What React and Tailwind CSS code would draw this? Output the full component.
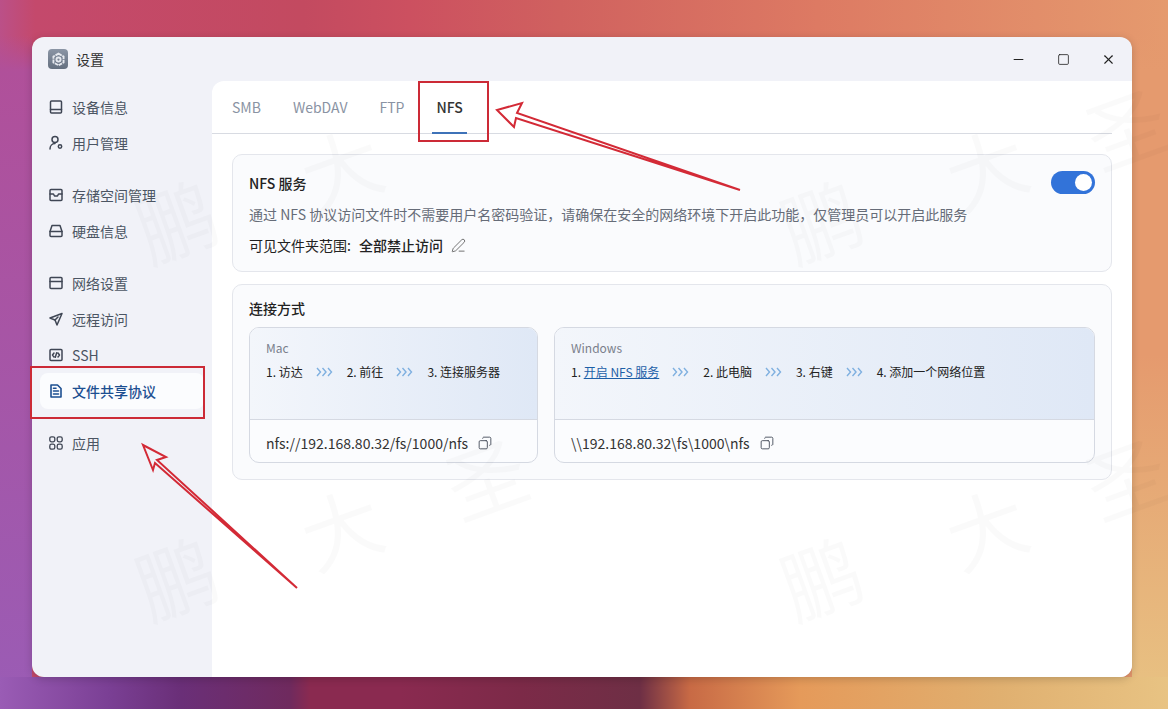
import { Copy, PenLine, Minus, Square, X } from "lucide-react";

const font = { fontFamily: '"Noto Sans CJK SC", "Noto Sans", sans-serif' };

function IconBase({ children }) {
  return (
    <svg width="16" height="16" viewBox="0 0 16 16" fill="none" stroke="#3f4654" strokeWidth="1.5" strokeLinejoin="round" strokeLinecap="round" className="shrink-0">
      {children}
    </svg>
  );
}

const icons = {
  device: <IconBase><rect x="2.5" y="2" width="11" height="12" rx="1" /><path d="M2.5 10.5h11" /></IconBase>,
  user: <IconBase><circle cx="7" cy="4.6" r="3" /><path d="M2 14c0-3 2-5.4 5-5.4" /><circle cx="12" cy="11.5" r="1.7" /></IconBase>,
  storage: <IconBase><rect x="2" y="2.5" width="12" height="11" rx="1" /><path d="M2 7h3.5l1 2h3l1-2H14" /></IconBase>,
  disk: <IconBase><path d="M4 2.5h8l2 6v4a1 1 0 0 1-1 1H3a1 1 0 0 1-1-1v-4z" /><path d="M2 8.5h12" /></IconBase>,
  network: <IconBase><rect x="2" y="2.5" width="12" height="11" rx="1" /><path d="M2 6.5h12" /></IconBase>,
  remote: <IconBase><path d="M14 2.5 2 7l5 2 2 5z" /><path d="M7 9l3-3" /></IconBase>,
  ssh: <IconBase><rect x="2" y="2.5" width="12" height="11" rx="1" /><path d="M6 6 4.5 8 6 10M10 6l1.5 2L10 10M8.7 5.8 7.3 10.2" /></IconBase>,
  file: (
    <svg width="16" height="16" viewBox="0 0 16 16" fill="none" stroke="#1d4f91" strokeWidth="1.6" strokeLinejoin="round" strokeLinecap="round" className="shrink-0">
      <path d="M3 2h6.5L13 5.5V14H3z" /><path d="M5.5 8h5M5.5 11h5M5.5 5.2H8" />
    </svg>
  ),
  apps: (
    <svg width="16" height="16" viewBox="0 0 16 16" fill="none" stroke="#3f4654" strokeWidth="1.3" className="shrink-0">
      <rect x="1.8" y="1.8" width="5" height="5" rx="1.7" />
      <rect x="9.2" y="1.8" width="5" height="5" rx="1.7" />
      <rect x="1.8" y="9.2" width="5" height="5" rx="1.7" />
      <rect x="9.2" y="9.2" width="5" height="5" rx="1.7" />
    </svg>
  ),
};

const groups = [
  [
    { label: "设备信息", icon: icons.device },
    { label: "用户管理", icon: icons.user },
  ],
  [
    { label: "存储空间管理", icon: icons.storage },
    { label: "硬盘信息", icon: icons.disk },
  ],
  [
    { label: "网络设置", icon: icons.network },
    { label: "远程访问", icon: icons.remote },
    { label: "SSH", icon: icons.ssh },
    { label: "文件共享协议", icon: icons.file, active: true },
  ],
  [{ label: "应用", icon: icons.apps }],
];

const marks = [
  ["鹏", "left-[135px] top-[178px]"],
  ["大", "left-[300px] top-[125px]"],
  ["大", "left-[300px] top-[485px]"],
  ["圣", "left-[445px] top-[435px]"],
  ["鹏", "left-[135px] top-[535px]"],
  ["鹏", "left-[780px] top-[178px]"],
  ["大", "left-[945px] top-[125px]"],
  ["大", "left-[945px] top-[485px]"],
  ["圣", "left-[1085px] top-[85px]"],
  ["圣", "left-[1085px] top-[435px]"],
  ["鹏", "left-[780px] top-[535px]"],
];

function Chevrons() {
  return (
    <svg width="17" height="10" viewBox="0 0 17 10" fill="none" stroke="#7fb0e0" strokeWidth="1.4" className="ml-[13px] mr-[14px] shrink-0">
      <path d="M1 1l3.5 4L1 9M6.5 1 10 5 6.5 9M12 1l3.5 4-3.5 4" />
    </svg>
  );
}

function ConnectCard({ name, className, steps, address }) {
  return (
    <div className={`flex flex-col overflow-hidden rounded-[10px] border border-[#d5d9e2] bg-[#fbfcfe] ${className}`}>
      <div className="h-[92px] border-b border-[#d5d9e2] bg-gradient-to-r from-[#f3f6fb] to-[#dfe8f6] px-4 pt-[11px]">
        <div className="text-xs leading-[18px] text-[#7a808c]">{name}</div>
        <div className="mt-[6px] flex items-center text-xs leading-[18px] text-[#222]">
          {steps.map((step, i) => (
            <div key={i} className="flex items-center">
              {i > 0 && <Chevrons />}
              <span>{step}</span>
            </div>
          ))}
        </div>
      </div>
      <div className="flex flex-1 items-center gap-[10px] px-4 pt-1 text-sm text-[#333]">
        <span>{address}</span>
        <Copy size={14} color="#3f4654" strokeWidth={1.5} className="-scale-x-100" />
      </div>
    </div>
  );
}

export default function App() {
  return (
    <div
      style={font}
      className="relative h-[709px] w-[1168px] overflow-hidden bg-[image:linear-gradient(90deg,#9a5cb5_0px,#7a3f94_110px,#6a2f78_180px,#6f2a5e_290px,#8a2a50_310px,#8a2a50_400px,#7c2a48_520px,#6e2f45_640px,#c86a45_690px,#e59a5a_800px,#e0b070_1000px,#e8c383_1168px),linear-gradient(180deg,transparent_0%,transparent_5%,#b0509a_10%,#9a5cb5_100%),linear-gradient(180deg,transparent_0%,transparent_5%,#e59a6e_10%,#e59a6e_50%,#e8c383_100%),linear-gradient(90deg,#bb5088_0%,#c4496c_3%,#c34a60_26%,#cc5060_35%,#d0615f_48%,#dd7a63_70%,#e59a6e_100%)] bg-[size:100%_32px,32px_100%,36px_100%,100%_100%] bg-[position:0_100%,0_0,100%_0,0_0] bg-no-repeat pl-8 pt-[37px]"
    >
      <div className="flex h-[640px] w-[1100px] overflow-hidden rounded-xl bg-[#f1f2f8] shadow-[0_2px_8px_rgba(0,0,0,0.18)]">
        <aside className="w-[180px] shrink-0">
          <div className="flex h-11 items-center gap-2 pl-4 text-sm text-[#333]">
            <div className="flex h-5 w-5 items-center justify-center rounded bg-gradient-to-b from-[#8b95a5] to-[#657080]">
              <svg width="15" height="15" viewBox="0 0 16 16" fill="none" stroke="#e5e8ee" strokeWidth="2">
                <circle cx="8" cy="8" r="2.2" />
                <path d="M8 1.8 13.4 4.9v6.2L8 14.2 2.6 11.1V4.9z" strokeDasharray="4 0.8" />
              </svg>
            </div>
            <span>设置</span>
          </div>
          <nav className="flex flex-col gap-4 px-2 pt-2">
            {groups.map((group, i) => (
              <div key={i} className="flex flex-col">
                {group.map((item) => (
                  <div
                    key={item.label}
                    className={`flex h-9 items-center gap-2 rounded-lg px-2 text-sm ${item.active ? "bg-[#fbfcfe] font-medium text-[#1d4f91]" : "text-[#4b5563]"}`}
                  >
                    {item.icon}
                    <span>{item.label}</span>
                  </div>
                ))}
              </div>
            ))}
          </nav>
        </aside>

        <div className="flex min-w-0 flex-1 flex-col">
          <div className="flex h-11 items-center justify-end gap-[31px] pr-4 text-[#222]">
            <Minus size={15} strokeWidth={1.8} />
            <Square size={13} strokeWidth={1.5} />
            <X size={15} strokeWidth={1.8} />
          </div>
          <main className="flex-1 rounded-tl-xl bg-white pl-5 pr-5">
            <div className="-ml-5 flex h-[53px] gap-6 border-b border-[#d8dbe2] pl-4 text-sm">
              <div className="flex items-center px-1 text-[#8a93a3]">SMB</div>
              <div className="flex items-center px-1 text-[#8a93a3]">WebDAV</div>
              <div className="flex items-center px-1 text-[#8a93a3]">FTP</div>
              <div className="relative flex items-center px-1 font-medium text-[#333]">
                NFS
                <div className="absolute -bottom-px left-0 h-[2px] w-full bg-[#3e72b8]" />
              </div>
            </div>

            <section className="mt-5 h-[118px] rounded-[10px] border border-[#e4e6ec] bg-[#fafbfd] px-4 pt-4">
              <div className="flex items-center justify-between">
                <div className="text-sm font-medium leading-[22px] text-[#222]">NFS 服务</div>
                <div className="flex h-[23px] w-11 items-center justify-end rounded-full bg-[#3273d9] pr-[3px]">
                  <div className="h-[17px] w-[17px] rounded-full bg-white" />
                </div>
              </div>
              <p className="mt-[10px] text-sm leading-5 text-[#666c78]">
                通过 NFS 协议访问文件时不需要用户名密码验证，请确保在安全的网络环境下开启此功能，仅管理员可以开启此服务
              </p>
              <div className="mt-[11px] flex items-center text-sm leading-5 text-[#222]">
                <span>可见文件夹范围:</span>
                <span className="ml-2 font-medium">全部禁止访问</span>
                <PenLine size={15} color="#555" strokeWidth={1.3} className="ml-2" />
              </div>
            </section>

            <section className="mt-3 h-[196px] rounded-[10px] border border-[#e4e6ec] bg-[#fafbfd] px-4 pt-3">
              <div className="text-sm font-medium leading-[22px] text-[#222]">连接方式</div>
              <div className="mt-2 flex gap-4">
                <ConnectCard
                  name="Mac"
                  className="h-[136px] w-[289px]"
                  steps={["1. 访达", "2. 前往", "3. 连接服务器"]}
                  address="nfs://192.168.80.32/fs/1000/nfs"
                />
                <ConnectCard
                  name="Windows"
                  className="h-[136px] flex-1"
                  steps={[
                    <>1. <span className="text-[#1d5fa8] underline">开启 NFS 服务</span></>,
                    "2. 此电脑",
                    "3. 右键",
                    "4. 添加一个网络位置",
                  ]}
                  address="\\192.168.80.32\fs\1000\nfs"
                />
              </div>
            </section>
          </main>
        </div>
      </div>

      {marks.map(([text, pos], i) => (
        <span key={i} className={`pointer-events-none absolute -rotate-[20deg] text-[80px] leading-none text-black/[0.02] ${pos}`}>
          {text}
        </span>
      ))}

      <div className="absolute left-[418px] top-[81px] h-[61px] w-[71px] border-2 border-[#cc2a36]" />
      <div className="absolute left-[30px] top-[366px] h-[53px] w-[175px] border-2 border-[#cc2a36]" />
      <svg width="1168" height="709" viewBox="0 0 1168 709" fill="none" stroke="#d32a36" strokeWidth="2" strokeLinejoin="miter" className="pointer-events-none absolute left-0 top-0">
        <path d="M740 190 517 113 522 103 497 110 514 127 516 118z" />
        <path d="M297 588 157 460 166 457 143 445 153 470 155 463z" />
      </svg>
    </div>
  );
}
